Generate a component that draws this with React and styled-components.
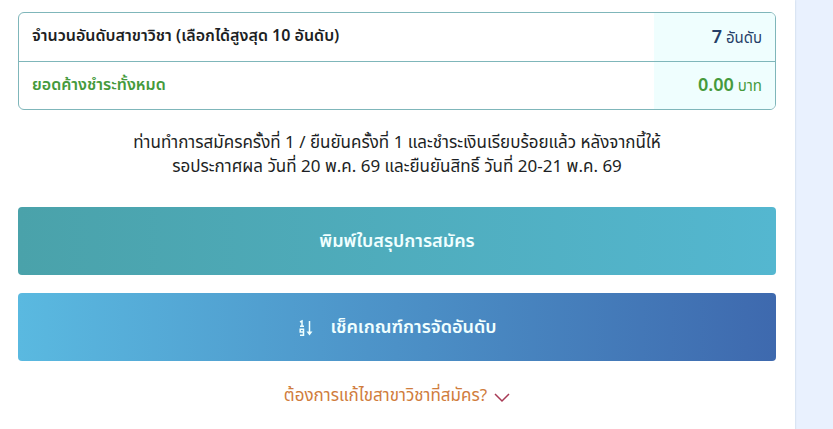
import React, { useState } from 'react';
import styled, { createGlobalStyle } from 'styled-components';

const GlobalStyle = createGlobalStyle`
  * {
    box-sizing: border-box;
  }

  body {
    margin: 0;
    background: #e9f1fe;
    font-family: 'Noto Sans Thai', 'Noto Sans', 'Open Sans', sans-serif;
    color: #1d1f24;
  }
`;

const Page = styled.div`
  min-height: 100vh;
  padding-right: 38px;
  display: flex;
`;

const Card = styled.main`
  flex: 1;
  padding: 12px 19px 20px 18px;
  background: #fff;
  box-shadow: 0 0 2px rgba(60, 90, 120, 0.25);
`;

const SummaryTable = styled.table`
  width: 100%;
  border: 1px solid #7fb6ba;
  border-radius: 6px;
  border-spacing: 0;
  overflow: hidden;

  tr + tr > * {
    border-top: 1px solid #7fb6ba;
  }
`;

const Label = styled.th`
  height: 48px;
  padding: 0 13px 2px;
  text-align: left;
  font-size: 16px;
  line-height: 24px;
  font-weight: 600;
  color: ${({ $color }) => $color};
`;

const Value = styled.td`
  width: 121px;
  padding: 0 13px;
  background: #effefe;
  text-align: right;
  white-space: nowrap;
  font-size: 15px;
  line-height: 24px;
  color: ${({ $color }) => $color};

  strong {
    font-family: 'Noto Sans', sans-serif;
    font-size: 18px;
    font-weight: 600;
  }
`;

const Notice = styled.p`
  margin: 21px 0 28px;
  text-align: center;
  font-size: 17px;
  line-height: 24px;
`;

const ActionButton = styled.button`
  width: 100%;
  height: 68px;
  margin-bottom: 18px;
  padding: 2px 0 0;
  display: flex;
  align-items: center;
  justify-content: center;
  gap: 17px;
  border: 0;
  border-radius: 4px;
  background: linear-gradient(90deg, ${({ $from }) => $from}, ${({ $to }) => $to});
  color: #f0ffff;
  font-family: inherit;
  font-size: 18px;
  line-height: 24px;
  font-weight: 600;
  cursor: pointer;
`;

const EditToggle = styled.button`
  display: flex;
  align-items: center;
  gap: 7px;
  margin: 0 auto;
  padding: 5px 0;
  border: 0;
  background: none;
  color: #d07c3c;
  font-family: inherit;
  font-size: 17px;
  line-height: 24px;
  cursor: pointer;
`;

const SortIcon = () => (
  <svg width="16" height="18" viewBox="0 0 16 18" fill="none" stroke="currentColor" aria-hidden="true">
    <path d="M2 3L4 2V7M2 7.2H6" strokeWidth="1.5" />
    <path d="M5.5 13H2.2V10.2H5.5V16.2H2" strokeWidth="1.5" />
    <path d="M11.5 2V14" strokeWidth="1.5" />
    <path d="M8.5 12.5H14.5L11.5 16.5Z" fill="currentColor" stroke="none" />
  </svg>
);

const ChevronIcon = () => (
  <svg width="16" height="14" viewBox="0 0 16 14" fill="none" stroke="#a83a55" strokeWidth="1.5" aria-hidden="true">
    <path d="M1 5L8 12L15 5" />
  </svg>
);

const rows = [
  {
    label: 'จำนวนอันดับสาขาวิชา (เลือกได้สูงสุด 10 อันดับ)',
    value: '7',
    unit: 'อันดับ',
    labelColor: '#1d1f24',
    valueColor: '#263e68',
  },
  {
    label: 'ยอดค้างชำระทั้งหมด',
    value: '0.00',
    unit: 'บาท',
    labelColor: '#459a3c',
    valueColor: '#459a3c',
  },
];

const App = () => {
  const [editing, setEditing] = useState(false);

  return (
    <>
      <GlobalStyle />
      <Page>
        <Card>
          <SummaryTable>
            <tbody>
              {rows.map((row) => (
                <tr key={row.label}>
                  <Label scope="row" $color={row.labelColor}>
                    {row.label}
                  </Label>
                  <Value $color={row.valueColor}>
                    <strong>{row.value}</strong> {row.unit}
                  </Value>
                </tr>
              ))}
            </tbody>
          </SummaryTable>
          <Notice>
            ท่านทำการสมัครครั้งที่ 1 / ยืนยันครั้งที่ 1 และชำระเงินเรียบร้อยแล้ว หลังจากนี้ให้
            <br />
            รอประกาศผล วันที่ 20 พ.ค. 69 และยืนยันสิทธิ์ วันที่ 20-21 พ.ค. 69
          </Notice>
          <ActionButton type="button" $from="#4aa2aa" $to="#54b7d0">
            พิมพ์ใบสรุปการสมัคร
          </ActionButton>
          <ActionButton type="button" $from="#5ab9e0" $to="#3e69ae">
            <SortIcon />
            เช็คเกณฑ์การจัดอันดับ
          </ActionButton>
          <EditToggle type="button" aria-expanded={editing} onClick={() => setEditing(!editing)}>
            ต้องการแก้ไขสาขาวิชาที่สมัคร?
            <ChevronIcon />
          </EditToggle>
        </Card>
      </Page>
    </>
  );
};

export default App;
